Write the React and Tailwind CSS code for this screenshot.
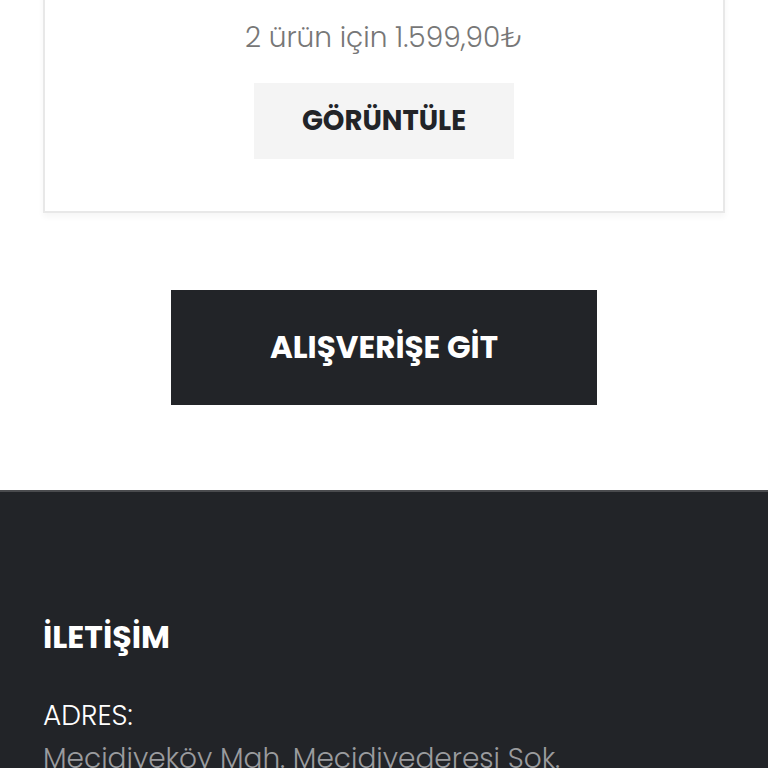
export default function App() {
  const font = { fontFamily: "Poppins, Inter, 'Noto Sans', sans-serif" };
  return (
    <div className="w-[768px] h-[768px] overflow-hidden bg-white" style={font}>
      <div className="px-[43px] -mt-[42px]">
        <div className="border-2 border-[#e8e8e8] bg-white shadow-[0_4px_6px_rgba(0,0,0,0.04)] flex flex-col items-center pt-[56px] pb-[52px]">
          <div className="text-[28px] font-light text-[#777] leading-[44px]">2 ürün için 1.599,90₺</div>
          <div className="mt-[23px] w-[260px] h-[76px] bg-[#f4f4f4] flex items-center justify-center text-[27.5px] font-bold text-[#222428]">GÖRÜNTÜLE</div>
        </div>
      </div>
      <div className="flex justify-center mt-[77px]">
        <div className="w-[426px] h-[115px] bg-[#222428] flex items-center justify-center text-white text-[31px] font-bold">ALIŞVERİŞE GİT</div>
      </div>
      <div className="mt-[85px] bg-[#222428] border-t-2 border-[#4a4b4e] h-[400px] px-[43px] pt-[123px]">
        <div className="text-white text-[31.5px] font-bold leading-[44px]">İLETİŞİM</div>
        <div className="mt-[36px] text-white text-[28px] font-light leading-[42px]">ADRES:</div>
        <div className="mt-[1px] text-[#9a9b9e] text-[28px] font-light leading-[42px]">Mecidiyeköy Mah. Mecidiyederesi Sok.</div>
      </div>
    </div>
  );
}
